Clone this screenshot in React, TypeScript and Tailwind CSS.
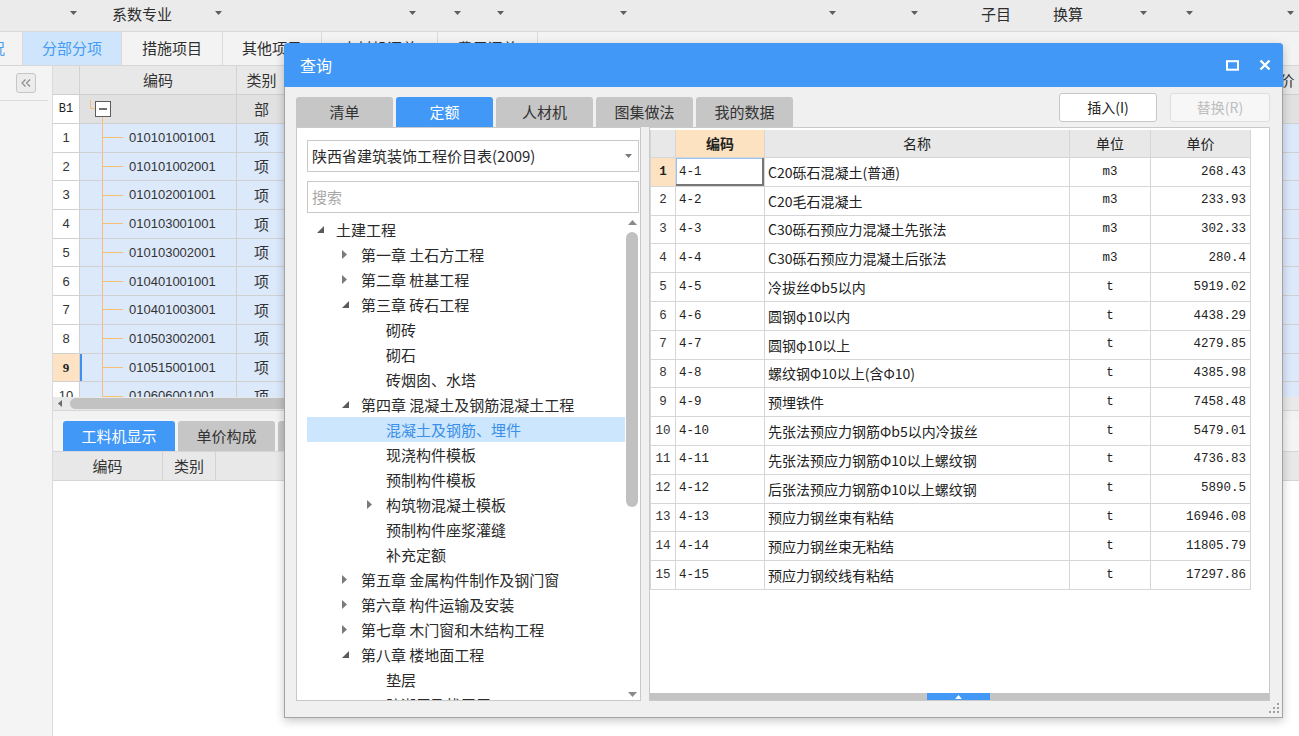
import React from "react";

type TreeItem = {
  label: string;
  level: 0 | 1 | 2;
  state?: "open" | "closed";
  selected?: boolean;
};

const tree: TreeItem[] = [
  { label: "土建工程", level: 0, state: "open" },
  { label: "第一章 土石方工程", level: 1, state: "closed" },
  { label: "第二章 桩基工程", level: 1, state: "closed" },
  { label: "第三章 砖石工程", level: 1, state: "open" },
  { label: "砌砖", level: 2 },
  { label: "砌石", level: 2 },
  { label: "砖烟囱、水塔", level: 2 },
  { label: "第四章 混凝土及钢筋混凝土工程", level: 1, state: "open" },
  { label: "混凝土及钢筋、埋件", level: 2, selected: true },
  { label: "现浇构件模板", level: 2 },
  { label: "预制构件模板", level: 2 },
  { label: "构筑物混凝土模板", level: 2, state: "closed" },
  { label: "预制构件座浆灌缝", level: 2 },
  { label: "补充定额", level: 2 },
  { label: "第五章 金属构件制作及钢门窗", level: 1, state: "closed" },
  { label: "第六章 构件运输及安装", level: 1, state: "closed" },
  { label: "第七章 木门窗和木结构工程", level: 1, state: "closed" },
  { label: "第八章 楼地面工程", level: 1, state: "open" },
  { label: "垫层", level: 2 },
  { label: "防潮层及找平层", level: 2 },
];

const levelPad: Record<number, string> = {
  0: "pl-[7px]",
  1: "pl-[32px]",
  2: "pl-[57px]",
};

const quotas = [
  ["4-1", "C20砾石混凝土(普通)", "m3", "268.43"],
  ["4-2", "C20毛石混凝土", "m3", "233.93"],
  ["4-3", "C30砾石预应力混凝土先张法", "m3", "302.33"],
  ["4-4", "C30砾石预应力混凝土后张法", "m3", "280.4"],
  ["4-5", "冷拔丝Φb5以内", "t", "5919.02"],
  ["4-6", "圆钢φ10以内", "t", "4438.29"],
  ["4-7", "圆钢φ10以上", "t", "4279.85"],
  ["4-8", "螺纹钢Φ10以上(含Φ10)", "t", "4385.98"],
  ["4-9", "预埋铁件", "t", "7458.48"],
  ["4-10", "先张法预应力钢筋Φb5以内冷拔丝", "t", "5479.01"],
  ["4-11", "先张法预应力钢筋Φ10以上螺纹钢", "t", "4736.83"],
  ["4-12", "后张法预应力钢筋Φ10以上螺纹钢", "t", "5890.5"],
  ["4-13", "预应力钢丝束有粘结", "t", "16946.08"],
  ["4-14", "预应力钢丝束无粘结", "t", "11805.79"],
  ["4-15", "预应力钢绞线有粘结", "t", "17297.86"],
];

const bgCodes = [
  "010101001001",
  "010101002001",
  "010102001001",
  "010103001001",
  "010103002001",
  "010401001001",
  "010401003001",
  "010503002001",
  "010515001001",
  "010606001001",
];

// columns of the grid behind the dialog
const gridCols = [
  { w: "w-[27px]", label: "" },
  { w: "w-[157px]", label: "编码" },
  { w: "w-[50px]", label: "类别" },
  { w: "w-[413px]", label: "名称" },
  { w: "w-[300px]", label: "项目特征" },
  { w: "w-[60px]", label: "单位" },
  { w: "w-[90px]", label: "工程量" },
  { w: "w-[80px]", label: "含量" },
  { w: "w-[100px]", label: "单价" },
];

function Caret({ className = "", color = "#5e5e5e" }: { className?: string; color?: string }) {
  return (
    <svg width="7" height="4" viewBox="0 0 7 4" className={className}>
      <path d="M0 0H7L3.5 4Z" fill={color} />
    </svg>
  );
}

function Toolbar() {
  const cells = [
    { w: "w-[80px]" },
    { w: "w-[145px]", label: "系数专业", pl: "pl-[32px]" },
    { w: "w-[194px]" },
    { w: "w-[45px]" },
    { w: "w-[43px]" },
    { w: "w-[123px]" },
    { w: "w-[209px]" },
    { w: "w-[82px]" },
    { w: "w-[119px]", label: "子目", pl: "pl-[60px]", noCaret: true },
    { w: "w-[110px]", label: "换算", pl: "pl-[13px]" },
    { w: "w-[46px]" },
    { w: "w-[101px]" },
  ];
  return (
    <div className="flex h-[32px] items-center border-b border-[#d8d8d8] bg-[#ebebeb] pb-[5px]">
      {cells.map((c, i) => (
        <div key={i} className={`${c.w} ${c.pl ?? ""} flex shrink-0 items-center`}>
          {c.label && <span className="text-[15px] leading-none text-[#2e2e2e]">{c.label}</span>}
          {!c.noCaret && <Caret className="ml-auto mr-[3px]" />}
        </div>
      ))}
    </div>
  );
}

function TopTabs() {
  const tabs = [
    { w: "w-[99px]", label: "分部分项", active: true },
    { w: "w-[101px]", label: "措施项目" },
    { w: "w-[99px]", label: "其他项目" },
    { w: "w-[116px]", label: "人材机汇总" },
    { w: "w-[100px]", label: "费用汇总" },
  ];
  return (
    <div className="flex h-[34px] border-b border-[#d6d6d6] bg-[#f3f3f3]">
      <div className="flex w-[23px] shrink-0 items-center overflow-hidden border-r border-[#dadada]">
        <span className="ml-[-10px] text-[15px] text-[#4a9df5]">况</span>
      </div>
      {tabs.map((t) => (
        <div
          key={t.label}
          className={`${t.w} flex shrink-0 items-center justify-center border-r border-[#dadada] text-[15px] ${
            t.active ? "bg-[#cfe5fb] text-[#439bf5]" : "text-[#2e2e2e]"
          }`}
        >
          {t.label}
        </div>
      ))}
    </div>
  );
}

function Sidebar() {
  return (
    <div className="flex w-[53px] shrink-0 flex-col border-r border-[#dadada] bg-[#f4f4f4]">
      <div className="ml-[16px] mt-[7px] flex h-[20px] w-[20px] items-center justify-center rounded-[3px] border border-[#c6c6c6] bg-[#ececec]">
        <svg width="10" height="8" viewBox="0 0 10 8">
          <path d="M4.5 0.5L1 4l3.5 3.5M9 0.5L5.5 4L9 7.5" stroke="#8c8c8c" fill="none" strokeWidth="1.2" />
        </svg>
      </div>
      <div className="mt-[7px] h-px w-[48px] bg-[#dcdcdc]" />
    </div>
  );
}

function MainGrid() {
  return (
    <div className="flex min-w-0 flex-1 flex-col overflow-hidden bg-white">
      {/* header */}
      <div className="flex h-[29px] shrink-0 border-b border-[#cfcfcf] bg-[#e8e8e8]">
        {gridCols.map((c, i) => (
          <div
            key={i}
            className={`${c.w} flex shrink-0 items-center justify-center border-r border-[#d2d2d2] text-[15px] text-[#333]`}
          >
            {c.label}
          </div>
        ))}
      </div>

      {/* body */}
      <div className="h-[302px] shrink-0 overflow-hidden">
        <div className="flex h-[29px] border-b border-[#d0d0d0]">
          <div className="flex w-[27px] shrink-0 items-center justify-center border-r border-[#d0d0d0] bg-white font-['Liberation_Mono',monospace] text-[12px] text-[#222]">
            B1
          </div>
          <div className="flex w-[157px] shrink-0 items-stretch border-r border-[#d0d0d0] bg-[#e1e1e1]">
            <svg width="40" height="28" viewBox="0 0 40 28">
              <path d="M10.5 5V13.5H15" stroke="#f5bf78" fill="none" />
              <rect x="15.5" y="6.5" width="15" height="15" fill="#fff" stroke="#5c5c5c" />
              <path d="M19 14H27" stroke="#333" strokeWidth="1.4" />
              <path d="M22.5 22V28" stroke="#f5bf78" />
            </svg>
          </div>
          <div className="flex w-[50px] shrink-0 items-center justify-center border-r border-[#d0d0d0] bg-[#e1e1e1] text-[15px]">
            部
          </div>
          {gridCols.slice(3).map((c, i) => (
            <div key={i} className={`${c.w} shrink-0 border-r border-[#d0d0d0] bg-[#e1e1e1]`} />
          ))}
        </div>
        {bgCodes.map((code, i) => {
          const current = i === 8;
          return (
            <div key={code + i} className="flex h-[28.7px] border-b border-[#d0d0d0]">
              <div
                className={`flex w-[27px] shrink-0 items-center justify-center border-r border-[#d0d0d0] text-[13px] ${
                  current
                    ? "bg-[#fde3c3] font-['Liberation_Serif',serif] font-bold text-[#222]"
                    : "bg-white font-['Liberation_Sans',sans-serif] text-[#333]"
                }`}
              >
                {i + 1}
              </div>
              <div
                className={`flex w-[157px] shrink-0 items-center border-r border-[#d0d0d0] bg-[#dce9fb] ${
                  current ? "shadow-[inset_2px_0_0_#3f8ff0]" : ""
                }`}
              >
                <div className="w-[23px] self-stretch border-r border-[#f5bf78]" />
                <div className="h-px w-[20px] bg-[#f5bf78]" />
                <span className="ml-[6px] font-['Liberation_Sans',sans-serif] text-[13px] text-[#333]">{code}</span>
              </div>
              <div className="flex w-[50px] shrink-0 items-center justify-center border-r border-[#d0d0d0] bg-[#dce9fb] text-[15px]">
                项
              </div>
              {gridCols.slice(3).map((c, j) => (
                <div key={j} className={`${c.w} shrink-0 border-r border-[#d0d0d0] bg-[#dce9fb]`} />
              ))}
            </div>
          );
        })}
      </div>

      {/* horizontal scrollbar */}
      <div className="flex h-[14px] shrink-0 items-center border-b border-[#d6d6d6] bg-[#e9e9e9]">
        <svg width="4" height="7" viewBox="0 0 4 7" className="ml-[5px]">
          <path d="M4 0V7L0 3.5Z" fill="#6a6a6a" />
        </svg>
        <div className="ml-[8px] h-[11px] w-[1200px] rounded-full bg-[#c2c2c2]" />
      </div>
      <div className="h-[8px] shrink-0 bg-[#f2f2f2]" />

      {/* bottom tabs */}
      <div className="flex h-[33px] shrink-0 items-end gap-[3px] border-b border-[#d6d6d6] bg-[#f4f4f4] pl-[10px]">
        <div className="flex h-[30px] w-[112px] items-center justify-center rounded-t-[3px] bg-[#4198f7] text-[15px] text-white">
          工料机显示
        </div>
        <div className="flex h-[30px] w-[97px] items-center justify-center rounded-t-[3px] bg-[#c6c6c6] text-[15px] text-[#333]">
          单价构成
        </div>
        <div className="flex h-[30px] w-[97px] items-center justify-center rounded-t-[3px] bg-[#c6c6c6] text-[15px] text-[#333]">
          标准换算
        </div>
      </div>
      <div className="flex h-[29px] shrink-0 border-b border-[#d6d6d6] bg-[#e8e8e8] text-[15px] text-[#333]">
        <div className="flex w-[110px] shrink-0 items-center justify-center border-r border-[#d2d2d2]">编码</div>
        <div className="flex w-[53px] shrink-0 items-center justify-center border-r border-[#d2d2d2]">类别</div>
        <div className="flex w-[200px] shrink-0 items-center justify-center border-r border-[#d2d2d2]">名称</div>
      </div>
      <div className="flex-1 bg-white" />
    </div>
  );
}

function TreeArrow({ state }: { state?: "open" | "closed" }) {
  if (state === "open") {
    return (
      <svg width="7" height="7" viewBox="0 0 7 7" className="ml-[3px]">
        <path d="M7 0V7H0Z" fill="#5a5a5a" />
      </svg>
    );
  }
  if (state === "closed") {
    return (
      <svg width="5" height="9" viewBox="0 0 5 9" className="ml-[3px]">
        <path d="M0 0L5 4.5L0 9Z" fill="#7a7a7a" />
      </svg>
    );
  }
  return null;
}

function LeftPanel() {
  return (
    <div className="flex h-full w-[345px] shrink-0 flex-col border border-[#c9c9c9] bg-white pl-[10px] pr-px">
      <div className="mt-[12px] flex h-[32px] shrink-0 items-center border border-[#c9c9c9] bg-white pl-[4px] pr-[6px]">
        <span className="text-[15px] text-[#2a2a2a]">陕西省建筑装饰工程价目表(2009)</span>
        <Caret className="ml-auto" color="#7a7a7a" />
      </div>
      <div className="mt-[9px] flex h-[32px] shrink-0 items-center border border-[#c9c9c9] bg-white pl-[4px] text-[15px] text-[#a8a8a8]">
        搜索
      </div>
      <div className="mt-[4px] flex min-h-0 flex-1">
        <div className="min-w-0 flex-1 overflow-hidden">
          {tree.map((t, i) => (
            <div
              key={i}
              className={`flex h-[25px] items-center ${levelPad[t.level]} ${
                t.selected ? "bg-[#cce6fd] text-[#3b8fe8]" : "text-[#2a2a2a]"
              }`}
            >
              <div className="flex w-[12px] shrink-0 items-center">
                <TreeArrow state={t.state} />
              </div>
              <span className="ml-[10px] whitespace-nowrap text-[15px] leading-none">{t.label}</span>
            </div>
          ))}
        </div>
        <div className="flex w-[14px] shrink-0 flex-col items-center pb-[3px] pt-[3px]">
          <svg width="9" height="5" viewBox="0 0 9 5">
            <path d="M0 5L4.5 0L9 5Z" fill="#8a8a8a" />
          </svg>
          <div className="mt-[7px] h-[275px] w-[12px] rounded-full bg-[#c1c1c1]" />
          <svg width="9" height="5" viewBox="0 0 9 5" className="mt-auto">
            <path d="M0 0H9L4.5 5Z" fill="#8a8a8a" />
          </svg>
        </div>
      </div>
    </div>
  );
}

function QuotaName({ text }: { text: string }) {
  return <span className="whitespace-nowrap text-[14px] leading-none text-[#222]">{text}</span>;
}

function RightPanel() {
  return (
    <div className="flex h-full w-[621px] shrink-0 flex-col border border-[#c9c9c9] bg-white">
      <div className="w-[601px] pt-[2px]">
        <div className="flex h-[28px] border-b border-l border-[#d6d6d6] text-[14px] text-[#222]">
          <div className="w-[25px] shrink-0 border-r border-[#d6d6d6] bg-[#e8e8e8]" />
          <div className="flex w-[89px] shrink-0 items-center justify-center border-r border-[#d6d6d6] bg-[#fde2c1] font-bold">
            编码
          </div>
          <div className="flex w-[305px] shrink-0 items-center justify-center border-r border-[#d6d6d6] bg-[#e8e8e8]">
            名称
          </div>
          <div className="flex w-[81px] shrink-0 items-center justify-center border-r border-[#d6d6d6] bg-[#e8e8e8]">
            单位
          </div>
          <div className="flex w-[100px] shrink-0 items-center justify-center border-r border-[#d6d6d6] bg-[#e8e8e8]">
            单价
          </div>
        </div>
        {quotas.map(([code, name, unit, price], i) => {
          const first = i === 0;
          return (
            <div
              key={code}
              className="flex h-[28.8px] border-b border-l border-[#d6d6d6] font-['Liberation_Mono','Noto_Sans_CJK_SC',monospace] text-[12.5px] text-[#222]"
            >
              <div
                className={`flex w-[25px] shrink-0 items-center justify-center border-r border-[#d6d6d6] ${
                  first ? "bg-[#fde2c1] font-bold" : "bg-white text-[#333]"
                }`}
              >
                {i + 1}
              </div>
              <div
                className={`flex w-[89px] shrink-0 items-center border-r border-[#d6d6d6] pl-[3px] ${
                  first ? "shadow-[inset_-2px_-2px_0_#777,inset_1px_1px_0_#9cc3ee]" : ""
                }`}
              >
                {code}
              </div>
              <div className="flex w-[305px] shrink-0 items-center overflow-hidden border-r border-[#d6d6d6] pl-[3px] font-['Noto_Sans_CJK_SC',sans-serif]">
                <QuotaName text={name} />
              </div>
              <div className="flex w-[81px] shrink-0 items-center justify-center border-r border-[#d6d6d6]">
                {unit}
              </div>
              <div className="flex w-[100px] shrink-0 items-center justify-end border-r border-[#d6d6d6] pr-[4px]">
                {price}
              </div>
            </div>
          );
        })}
      </div>
      <div className="flex-1" />
      <div className="flex h-[7px] shrink-0 bg-[#c4c4c4]">
        <div className="ml-[277px] flex h-full w-[63px] items-center justify-center bg-[#4198f7]">
          <svg width="7" height="4" viewBox="0 0 7 4">
            <path d="M0 4L3.5 0L7 4Z" fill="#fff" />
          </svg>
        </div>
      </div>
    </div>
  );
}

function QueryDialog() {
  const tabs = ["清单", "定额", "人材机", "图集做法", "我的数据"];
  return (
    <div className="absolute left-[284px] top-[43px] flex h-[675px] w-[999px] flex-col rounded-t-[4px] border-x border-b border-[#a3a3a3] bg-[#f0f0f0] shadow-[0_3px_10px_rgba(0,0,0,0.22)]">
      <div className="-mx-px flex h-[44px] shrink-0 items-center rounded-t-[4px] bg-[#4198f7] pl-[16px] pr-[12px] text-white">
        <span className="text-[16px] leading-none">查询</span>
        <div className="ml-auto flex items-center gap-[20px]">
          <svg width="13" height="11" viewBox="0 0 13 11">
            <rect x="1" y="1.2" width="11" height="8.5" fill="none" stroke="#fff" strokeWidth="2" />
          </svg>
          <svg width="12" height="12" viewBox="0 0 12 12">
            <path d="M1.5 1.5L10.5 10.5M10.5 1.5L1.5 10.5" stroke="#fff" strokeWidth="2.4" />
          </svg>
        </div>
      </div>

      <div className="flex h-[40px] shrink-0 pl-[11px] pr-[12px]">
        <div className="mt-[10px] flex gap-[3px]">
          {tabs.map((t) => (
            <div
              key={t}
              className={`flex h-[30px] w-[97px] items-center justify-center rounded-t-[3px] text-[15px] ${
                t === "定额" ? "bg-[#4198f7] text-white" : "bg-[#c6c6c6] text-[#333]"
              }`}
            >
              {t}
            </div>
          ))}
        </div>
        <div className="ml-auto mt-[6px] flex gap-[13px]">
          <div className="flex h-[29px] w-[98px] items-center justify-center rounded-[3px] border border-[#c6c6c6] bg-white text-[14px] text-[#222]">
            插入(I)
          </div>
          <div className="flex h-[29px] w-[100px] items-center justify-center rounded-[3px] border border-[#dedede] bg-[#f7f7f7] text-[14px] text-[#bdbdbd]">
            替换(R)
          </div>
        </div>
      </div>

      <div className="flex h-[574px] shrink-0 gap-[8px] pl-[11px]">
        <LeftPanel />
        <RightPanel />
      </div>

      <div className="flex flex-1 items-end justify-end pb-[3px] pr-[2px]">
        <svg width="11" height="11" viewBox="0 0 11 11" fill="#a0a0a0">
          <rect x="8" y="0" width="2" height="2" />
          <rect x="4" y="4" width="2" height="2" />
          <rect x="8" y="4" width="2" height="2" />
          <rect x="0" y="8" width="2" height="2" />
          <rect x="4" y="8" width="2" height="2" />
          <rect x="8" y="8" width="2" height="2" />
        </svg>
      </div>
    </div>
  );
}

export default function App() {
  return (
    <div className="relative h-[736px] w-[1299px] overflow-hidden bg-[#f4f4f4] font-['Noto_Sans_CJK_SC','Noto_Sans',sans-serif] text-[#333]">
      <Toolbar />
      <TopTabs />
      <div className="flex h-[670px]">
        <Sidebar />
        <MainGrid />
      </div>
      <QueryDialog />
    </div>
  );
}
